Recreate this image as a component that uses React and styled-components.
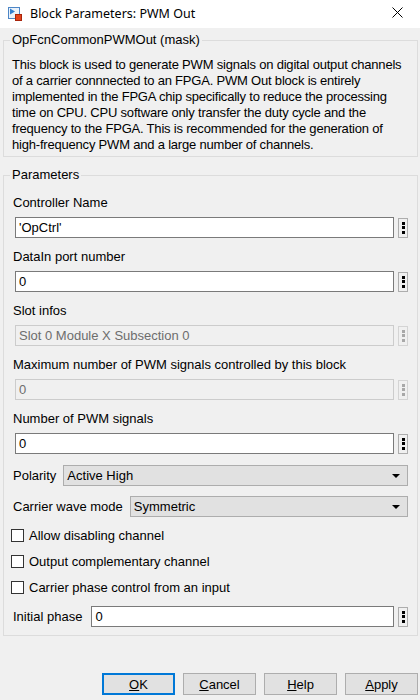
import styled, { createGlobalStyle } from 'styled-components';

const GlobalStyle = createGlobalStyle`
    html, body {
        margin: 0;
        padding: 0;
    }

    body {
        width: 420px;
        height: 700px;
        overflow: hidden;
        background: #f0f0f0;
        color: #000;
        font-family: "Liberation Sans", Arial, sans-serif;
        font-size: 13px;
    }
`;

// title bar icon: a little block with an input arrow and output port
const BlockIcon = () => (
    <svg width="14" height="14" viewBox="0 0 14 14">
        <rect x="0.5" y="0.5" width="11" height="11" fill="#eaf2fb" stroke="#4d86c6" />
        <polygon points="2,1.5 2,7.5 7,4.5" fill="#2f7fd0" />
        <rect x="7.5" y="7.5" width="6" height="6" fill="#e2441c" stroke="#a8250c" />
    </svg>
);

const CloseIcon = () => (
    <svg width="11" height="11" viewBox="0 0 11 11">
        <path d="M0.5 0.5 L10.5 10.5 M10.5 0.5 L0.5 10.5" stroke="#000" strokeWidth="1" />
    </svg>
);

const EllipsisButton = ({ disabled }) => (
    <DotsBox $disabled={disabled}>
        <Dot $disabled={disabled} />
        <Dot $disabled={disabled} />
        <Dot $disabled={disabled} />
    </DotsBox>
);

const TextField = ({ label, value, disabled }) => (
    <Field>
        <Label>{label}</Label>
        <InputRow>
            <Input $disabled={disabled}>{value}</Input>
            <EllipsisButton disabled={disabled} />
        </InputRow>
    </Field>
);

const Dropdown = ({ label, value, top }) => (
    <InlineRow $top={top}>
        <Label>{label}</Label>
        <Select>
            <span>{value}</span>
            <Caret />
        </Select>
    </InlineRow>
);

const Check = ({ label }) => (
    <CheckRow>
        <Box />
        <span>{label}</span>
    </CheckRow>
);

const App = () => {
    return (
        <Window>
            <GlobalStyle />
            <TitleBar>
                <BlockIcon />
                <Title>Block Parameters: PWM Out</Title>
                <Close><CloseIcon /></Close>
            </TitleBar>

            <Group $top={4} $right={4} $bottom={3}>
                <Legend>OpFcnCommonPWMOut (mask)</Legend>
                <Description>
                    This block is used to generate PWM signals on digital output channels of a carrier
                    connnected to an FPGA. PWM Out block is entirely implemented in the FPGA chip
                    specifically to reduce the processing time on CPU. CPU software only transfer the
                    duty cycle and the frequency to the FPGA. This is recommended for the generation of
                    high-frequency PWM and a large number of channels.
                </Description>
            </Group>

            <Group $top={10} $right={9} $bottom={8}>
                <Legend>Parameters</Legend>
                <ParamList>
                    <TextField label="Controller Name" value="'OpCtrl'" />
                    <TextField label="DataIn port number" value="0" />
                    <TextField label="Slot infos" value="Slot 0 Module X Subsection 0" disabled />
                    <TextField label="Maximum number of PWM signals controlled by this block" value="0" disabled />
                    <TextField label="Number of PWM signals" value="0" />
                    <Dropdown label="Polarity" value="Active High" />
                    <Dropdown label="Carrier wave mode" value="Symmetric" top={-1} />
                    <Check label="Allow disabling channel" />
                    <Check label="Output complementary channel" />
                    <Check label="Carrier phase control from an input" />
                    <InlineRow>
                        <Label>Initial phase</Label>
                        <InputRow $grow>
                            <Input>0</Input>
                            <EllipsisButton />
                        </InputRow>
                    </InlineRow>
                </ParamList>
            </Group>

            <ButtonBar>
                <Button $default><u>O</u>K</Button>
                <Button><u>C</u>ancel</Button>
                <Button><u>H</u>elp</Button>
                <Button><u>A</u>pply</Button>
            </ButtonBar>
        </Window>
    );
};

const Window = styled.div`
    display: flex;
    flex-direction: column;
    height: 700px;
`;

const TitleBar = styled.div`
    display: flex;
    align-items: center;
    gap: 8px;
    height: 28px;
    padding: 0 0 0 8px;
    background: #fff;
    flex-shrink: 0;
`;

const Title = styled.div`
    flex: 1;
    font-family: "Noto Sans", "Liberation Sans", sans-serif;
    font-size: 12.5px;
    padding-bottom: 2px;
`;

const Close = styled.div`
    display: flex;
    width: 46px;
    justify-content: center;
    padding: 0 0 4px 0;
`;

const Group = styled.fieldset`
    margin: ${(props) => props.$top}px 2px 0 3px;
    padding: 0 ${(props) => props.$right}px ${(props) => props.$bottom}px 9px;
    border: 1px solid #dcdcdc;
    min-width: 0;
`;

const Legend = styled.legend`
    padding: 0 2px;
    margin-left: -3px;
    line-height: 16px;
`;

const Description = styled.p`
    margin: 9px 0 0 -1px;
    line-height: 16px;
    letter-spacing: -0.2px;
`;

const ParamList = styled.div`
    display: flex;
    flex-direction: column;
    gap: 11px;
    margin-top: 12px;
`;

const Field = styled.div`
    display: flex;
    flex-direction: column;
    gap: 6px;
`;

const Label = styled.div`
    line-height: 16px;
    white-space: nowrap;
`;

const InputRow = styled.div`
    display: flex;
    align-items: center;
    gap: 4px;
    margin-left: 2px;
    flex: ${(props) => (props.$grow ? 1 : 'none')};
`;

const Input = styled.div`
    flex: 1;
    box-sizing: border-box;
    height: 21px;
    line-height: 19px;
    padding: 0 3px;
    border: 1px solid ${(props) => (props.$disabled ? '#cccccc' : '#7a7a7a')};
    background: ${(props) => (props.$disabled ? '#f0f0f0' : '#fff')};
    color: ${(props) => (props.$disabled ? '#6d6d6d' : '#000')};
`;

const DotsBox = styled.div`
    display: flex;
    flex-direction: column;
    align-items: center;
    justify-content: center;
    gap: 1.5px;
    box-sizing: border-box;
    width: 10px;
    height: 20px;
    border: 1px solid ${(props) => (props.$disabled ? '#d4d4d4' : '#adadad')};
    background: #f0f0f0;
`;

const Dot = styled.span`
    width: 3px;
    height: 3px;
    background: ${(props) => (props.$disabled ? '#a8a8a8' : '#000')};
`;

const InlineRow = styled.div`
    display: flex;
    align-items: center;
    gap: 7px;
    margin-top: ${(props) => props.$top || 0}px;
`;

const Select = styled.div`
    flex: 1;
    display: flex;
    align-items: center;
    justify-content: space-between;
    box-sizing: border-box;
    height: 21px;
    padding: 0 7px 0 3px;
    border: 1px solid #adadad;
    background: #e1e1e1;
`;

const Caret = styled.span`
    width: 0;
    height: 0;
    border-left: 4px solid transparent;
    border-right: 4px solid transparent;
    border-top: 4px solid #000;
`;

const CheckRow = styled.label`
    display: flex;
    align-items: center;
    gap: 5px;
    height: 15px;
    margin-left: -2px;
    line-height: 15px;
`;

const Box = styled.span`
    box-sizing: border-box;
    width: 13px;
    height: 13px;
    border: 1px solid #333;
    background: #fff;
`;

const ButtonBar = styled.div`
    display: flex;
    justify-content: flex-end;
    gap: 8px;
    margin-top: 37px;
    padding-right: 2px;
`;

const Button = styled.div`
    box-sizing: border-box;
    display: flex;
    align-items: center;
    justify-content: center;
    width: 73px;
    height: 22px;
    border: ${(props) => (props.$default ? '2px solid #0078d7' : '1px solid #adadad')};
    background: #e1e1e1;
`;

export default App;
